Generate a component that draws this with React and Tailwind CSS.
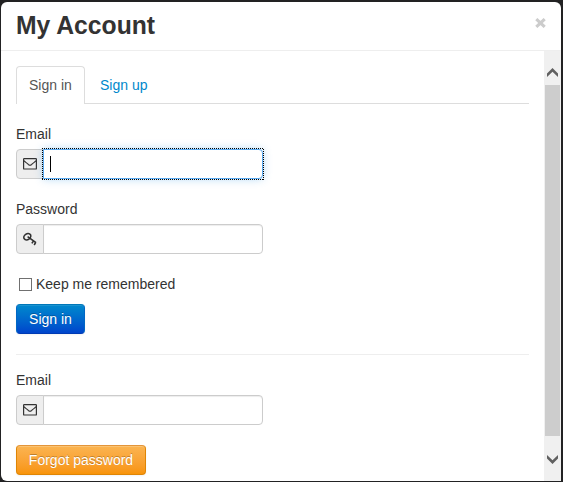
import React from "react";

function Envelope() {
  return (
    <svg width="14" height="12" viewBox="0 0 14 12" fill="none" stroke="#333" className="block">
      <rect x="0.6" y="0.6" width="12.8" height="10.4" rx="0.6" strokeWidth="1.2" />
      <path d="M0.8 2.6C2.6 4.2 4 5.2 5.4 6.5Q7 7.9 8.6 6.5C10 5.2 11.4 4.2 13.2 2.6" strokeWidth="1.05" />
    </svg>
  );
}

function Key() {
  return (
    <svg width="14" height="14" viewBox="0 0 14 14" fill="none" stroke="#333" className="block">
      <ellipse cx="4.3" cy="4.7" rx="3.7" ry="2.9" transform="rotate(-35 4.3 4.7)" strokeWidth="1.6" />
      <path d="M4.6 4.6L13 10.6M8.9 11.4L10.5 8.8M11.2 13L12.7 10.4" strokeWidth="1.6" />
    </svg>
  );
}

function Field({ label, icon, focused }) {
  return (
    <div>
      <label className="block h-5 text-sm leading-5">{label}</label>
      <div className="mt-[5px] flex h-[30px]">
        <span className="flex w-7 items-center justify-center rounded-l border border-[#ccc] bg-[#eee]">
          {icon}
        </span>
        <div
          className={
            focused
              ? "relative -ml-px flex w-[220px] items-center rounded-r border border-[#5aaaf0] bg-white pl-[6px] shadow-[0_0_8px_rgba(82,168,236,0.45)]"
              : "-ml-px w-[220px] rounded-r border border-[#ccc] bg-white shadow-[inset_0_1px_1px_rgba(0,0,0,0.075)]"
          }
        >
          {focused && (
            <>
              <span className="h-4 w-px bg-black" />
              <svg className="absolute -left-[2px] -top-[2px]" width="222" height="32" viewBox="0 0 222 32">
                <path
                  d="M0 0.5H222M0 31.5H222M0.5 0V32M221.5 1V32"
                  stroke="#000"
                  strokeDasharray="1 1"
                  fill="none"
                  shapeRendering="crispEdges"
                />
              </svg>
            </>
          )}
        </div>
      </div>
    </div>
  );
}

function Chevron({ down }) {
  return (
    <svg width="11" height="9" viewBox="0 0 11 9" className="block">
      <path
        d={down ? "M0 0L5.5 5.2L11 0V3.6L5.5 9L0 3.6Z" : "M0 9L5.5 3.8L11 9V5.4L5.5 0L0 5.4Z"}
        fill="#606060"
      />
    </svg>
  );
}

export default function App() {
  return (
    <div className="h-[482px] w-[563px] overflow-hidden bg-[#222223] pb-px pl-px pr-[2px] pt-[2px] font-['Liberation_Sans',Arial,sans-serif] text-[#333]">
      <div className="flex h-[479px] flex-col overflow-hidden rounded-[6px] rounded-br-none bg-white">
        <header className="flex h-[49px] shrink-0 items-start justify-between border-b border-[#eee] pl-[15px] pr-[15px]">
          <h3 className="mt-[3px] origin-left scale-x-[0.95] text-[26px] font-bold leading-10">My Account</h3>
          <button aria-label="Close" className="mt-[16px]">
            <svg width="11" height="10" viewBox="0 0 11 10" className="block">
              <path d="M1.3 1.1L9.7 8.9M9.7 1.1L1.3 8.9" stroke="#ccc" strokeWidth="3.1" />
            </svg>
          </button>
        </header>
        <div className="flex min-h-0 flex-1">
          <main className="flex-1 pl-[15px] pr-[15px] pt-[15px]">
            <nav className="flex h-[38px] border-b border-[#ddd] text-sm leading-5">
              <span className="h-[38px] w-[69px] rounded-t border border-b-0 border-[#ddd] bg-white pl-3 pt-[8px] text-[#555]">
                Sign in
              </span>
              <span className="pl-[15px] pt-[9px] text-[#0088cc]">Sign up</span>
            </nav>
            <div className="mt-5 flex flex-col gap-5">
              <Field label="Email" icon={<Envelope />} focused />
              <Field label="Password" icon={<Key />} />
            </div>
            <label className="mt-5 flex h-5 items-center text-sm leading-5">
              <span className="ml-[3px] mr-1 mt-px size-[13px] border border-[#707070] bg-white" />
              Keep me remembered
            </label>
            <button className="mt-[10px] block h-[30px] w-[69px] rounded border border-[#0067c4] border-b-[#003ab3] border-t-[#0077b8] bg-linear-to-b from-[#0088cc] to-[#0044cc] text-sm leading-5 text-white shadow-[inset_0_1px_0_rgba(255,255,255,0.1),0_1px_2px_rgba(0,0,0,0.05)] [text-shadow:0_-1px_0_rgba(0,0,0,0.25)]">
              Sign in
            </button>
            <div className="mb-[15px] mt-5 h-px bg-[#eee]" />
            <Field label="Email" icon={<Envelope />} />
            <button className="mt-5 block h-[30px] w-[130px] rounded border border-[#df8505] border-t-[#e3953a] bg-linear-to-b from-[#fbb450] to-[#f89406] text-sm leading-5 text-white shadow-[inset_0_1px_0_rgba(255,255,255,0.2),0_1px_2px_rgba(0,0,0,0.05)] [text-shadow:0_-1px_0_rgba(0,0,0,0.25)]">
              Forgot password
            </button>
          </main>
          <div className="flex w-[17px] flex-col items-center bg-[#f0f0f0] pt-[17px]">
            <Chevron />
            <div className="mb-[19px] mt-[8px] h-[351px] w-[15px] shrink-0 bg-[#cdcdcd]" />
            <Chevron down />
          </div>
        </div>
      </div>
    </div>
  );
}
